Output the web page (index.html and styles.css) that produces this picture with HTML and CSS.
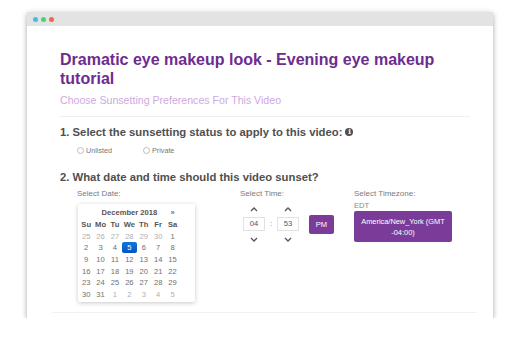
FILE: index.html
```html
<!DOCTYPE html>
<html>
<head>
	<meta charset="UTF-8">
	<title>Sunset video</title>
	<link rel="stylesheet" href="styles.css">
</head>
<body>
	<div class="window">
		<div class="titlebar">
			<span class="dot blue"></span>
			<span class="dot green"></span>
			<span class="dot red"></span>
		</div>

		<div class="content">
			<h1 class="title">Dramatic eye makeup look - Evening eye makeup tutorial</h1>
			<p class="subtitle">Choose Sunsetting Preferences For This Video</p>

			<h2 class="step step-one">1. Select the sunsetting status to apply to this video: <span class="info">i</span></h2>
			<div class="radios">
				<label class="radio"><span class="circle"></span>Unlisted</label>
				<label class="radio"><span class="circle"></span>Private</label>
			</div>

			<h2 class="step">2. What date and time should this video sunset?</h2>
			<div class="pickers">
				<div class="col col-date">
					<p class="label">Select Date:</p>
					<div class="calendar">
						<div class="cal-head">
							<span></span>
							<span class="month">December 2018</span>
							<span class="next">&raquo;</span>
						</div>
						<div class="cal-grid" id="grid">
							<!-- filled by script below -->
						</div>
					</div>
				</div>

				<div class="col col-time">
					<p class="label">Select Time:</p>
					<div class="time-row">
						<div class="spin">
							<svg class="chev" width="8" height="5" viewBox="0 0 8 5"><polyline points="1,4 4,1 7,4" /></svg>
							<span class="num">04</span>
							<svg class="chev" width="8" height="5" viewBox="0 0 8 5"><polyline points="1,1 4,4 7,1" /></svg>
						</div>
						<span class="colon">:</span>
						<div class="spin">
							<svg class="chev" width="8" height="5" viewBox="0 0 8 5"><polyline points="1,4 4,1 7,4" /></svg>
							<span class="num">53</span>
							<svg class="chev" width="8" height="5" viewBox="0 0 8 5"><polyline points="1,1 4,4 7,1" /></svg>
						</div>
						<button class="pm">PM</button>
					</div>
				</div>

				<div class="col col-zone">
					<p class="label">Select Timezone:</p>
					<p class="abbr">EDT</p>
					<button class="zone">America/New_York (GMT<br>-04:00)</button>
				</div>
			</div>
		</div>

		<div class="bottom-line"></div>
	</div>

<script>
var grid = document.getElementById('grid');
var names = ['Su','Mo','Tu','We','Th','Fr','Sa'];
var days = [25,26,27,28,29,30,1];
for(var d=2;d<=31;d++){ days.push(d); }
days.push(1,2,3,4,5);

for(var n=0;n<names.length;n++){
	var h = document.createElement('span');
	h.className = 'dow';
	h.textContent = names[n];
	grid.appendChild(h);
}
for(var i=0;i<days.length;i++){
	var c = document.createElement('span');
	c.className = 'day';
	if(i<6 || i>=37){ c.className += ' old'; } //other month
	if(i==10){ c.className += ' active'; } //Dec 5
	c.textContent = days[i];
	grid.appendChild(c);
}
</script>
</body>
</html>
```

FILE: styles.css
```css
body{
	margin:0;
	background:#fff;
	font-family:"Liberation Sans", Arial, sans-serif;
}
p,h1,h2{
	margin:0;
}
.window{
	width:466px;
	margin:12px 0 0 27px;
	background:#fff;
	box-shadow:0 2px 5px rgba(0,0,0,0.3), 0 0 8px rgba(0,0,0,0.06);
}
.titlebar{
	height:14px;
	background:#e3e3e3;
	display:flex;
	align-items:center;
	gap:3px;
	padding-left:6px;
}
.dot{
	width:5px;
	height:5px;
	border-radius:50%;
}
.blue{ background:#3ec1e0; }
.green{ background:#3fd67b; }
.red{ background:#f1674e; }

.content{
	padding:24px 23px 0 33px;
}
.title{
	font-size:16px;
	line-height:19px;
	font-weight:bold;
	color:#6e2c90;
	width:400px;
}
.subtitle{
	margin-top:6px;
	font-size:10.6px;
	line-height:13px;
	color:#cda9de;
	padding-bottom:9px;
	border-bottom:1px solid #efefef;
}
.step{
	font-size:11.3px;
	line-height:14px;
	font-weight:bold;
	color:#4f4f4f;
	display:flex;
	align-items:center;
	gap:2px;
}
.step-one{
	margin-top:8px;
}
.info{
	width:8px;
	height:8px;
	margin-left:1px;
	border-radius:50%;
	background:#4f4f4f;
	color:#fff;
	font-size:7px;
	line-height:8px;
	text-align:center;
	font-family:"DejaVu Serif", serif;
}
.radios{
	display:flex;
	margin:6px 0 15px 17px;
	height:10px;
	align-items:center;
}
.radio{
	display:flex;
	align-items:center;
	gap:2px;
	font-size:7.2px;
	color:#777;
	width:66px;
}
.circle{
	width:5px;
	height:5px;
	border:1px solid #bbb;
	border-radius:50%;
}

.pickers{
	display:flex;
	margin:5px 0 0 17px;
}
.col-date{
	width:163px;
}
.col-time{
	width:114px;
}
.label{
	font-size:8px;
	line-height:10px;
	color:#7a7a7a;
}
.calendar{
	width:117px;
	margin:5px 0 0 1px;
	padding:3px 0 1px 1px;
	box-sizing:border-box;
	border-radius:2px;
	box-shadow:0 1px 4px rgba(0,0,0,0.22);
	font-size:7.6px;
	color:#707070;
}
.cal-head,.cal-grid{
	display:grid;
	grid-template-columns:repeat(7,14.4px);
	grid-auto-rows:11.7px;
	align-items:center;
	text-align:center;
}
.cal-head{
	grid-template-columns:14.4px 72px 14.4px;
	font-weight:bold;
	color:#555;
}
.next{
	color:#777;
}
.dow{
	font-weight:bold;
	color:#555;
}
.day.old{
	color:#b0b0b0;
}
.day.active{
	background:linear-gradient(#0a7ad8,#0950c0);
	color:#fff;
	border-radius:2px;
	width:15px;
	height:11px;
	line-height:11px;
	justify-self:center;
}

.time-row{
	display:flex;
	align-items:flex-start;
	margin-top:8px;
	margin-left:3px;
}
.spin{
	display:flex;
	flex-direction:column;
	align-items:center;
}
.chev polyline{
	fill:none;
	stroke:#555;
	stroke-width:1.3;
}
.num{
	width:22px;
	height:14px;
	margin:5px 0 6px;
	box-sizing:border-box;
	border:1px solid #e2e2e2;
	font-size:7.6px;
	line-height:12px;
	text-align:center;
	color:#555;
}
.colon{
	width:12px;
	margin-top:10px;
	line-height:14px;
	text-align:center;
	font-size:8px;
	color:#888;
}
.pm{
	margin:8px 0 0 10px;
	width:25px;
	height:19px;
	border:none;
	border-radius:2px;
	background:#7b3c99;
	color:#fff;
	font-family:"Liberation Sans", Arial, sans-serif;
	font-size:7.6px;
	padding:0;
}
.abbr{
	margin-top:2px;
	font-size:7.6px;
	line-height:9px;
	color:#888;
}
.zone{
	display:block;
	margin-top:1px;
	width:98px;
	height:31px;
	border:none;
	border-radius:2px;
	background:#7b3c99;
	color:#fff;
	font-family:"Liberation Sans", Arial, sans-serif;
	font-size:7.4px;
	line-height:11px;
	padding:0;
}

.bottom-line{
	height:1px;
	background:#f1f1f1;
	margin:10px 16px 0 25px;
}
.window::after{
	content:"";
	display:block;
	height:5px;
}
```
